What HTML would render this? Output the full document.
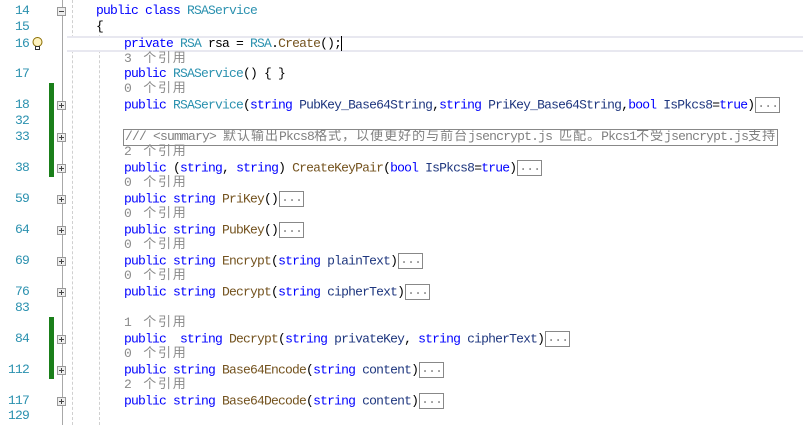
<!DOCTYPE html>
<html><head><meta charset="utf-8"><style>
body{margin:0;width:803px;height:425px;background:#fff;overflow:hidden;position:relative;font-family:"Liberation Mono","Noto Sans CJK SC",monospace;font-size:13px;letter-spacing:-0.8px}
.r{position:absolute;height:16px;line-height:16px;white-space:pre;left:0}
.n{position:absolute;width:29px;text-align:right;color:#2b91af;left:0}
.c{position:absolute;left:124px}
.lens{color:#8a8a8a;letter-spacing:1.8px}
.k{color:#0000ff}.t{color:#2b91af}.m{color:#74531f}.p{color:#1f377f}
.el{display:inline-block;border:1px solid #888;color:#888;height:14px;line-height:12px;vertical-align:middle;padding:0 1px;margin-left:1px}
.z{letter-spacing:1px}
.box{position:absolute;left:57px;width:9px;height:9px;border:1px solid #999;background:#eee;box-sizing:border-box}
.box:before{content:"";position:absolute;left:1px;top:3px;width:5px;height:1px;background:#444}
.box.p2:after{content:"";position:absolute;left:3px;top:1px;width:1px;height:5px;background:#444}
.g{position:absolute;left:49px;width:5px;background:#1a7f1a}
</style></head><body>
<div style="position:absolute;left:62px;top:0;width:1px;height:425px;background:#a8a8a8"></div>
<div style="position:absolute;left:72px;top:0;height:425px;border-left:1px dashed #d0d0d0"></div>
<div style="position:absolute;left:99px;top:20px;height:405px;border-left:1px dashed #d0d0d0"></div>
<div style="position:absolute;left:67px;top:36px;width:736px;height:12px;border-top:2px solid #e8e8f0;border-bottom:2px solid #e8e8f0;background:#fff"></div>
<div class="g" style="top:83px;height:94px"></div>
<div class="g" style="top:317px;height:62px"></div>
<div class="box" style="top:7px"></div>
<div class="box p2" style="top:101px"></div>
<div class="box p2" style="top:133px"></div>
<div class="box p2" style="top:164px"></div>
<div class="box p2" style="top:195px"></div>
<div class="box p2" style="top:226px"></div>
<div class="box p2" style="top:257px"></div>
<div class="box p2" style="top:288px"></div>
<div class="box p2" style="top:335px"></div>
<div class="box p2" style="top:366px"></div>
<div class="box p2" style="top:397px"></div>
<svg style="position:absolute;left:31px;top:36px" width="13" height="16" viewBox="0 0 13 16"><circle cx="6.5" cy="6" r="4.5" fill="#fff3c0" stroke="#8a6d00"/><rect x="4.5" y="10.5" width="4" height="3" fill="#fff" stroke="#333"/></svg>

<div class="r" style="top:3px"><span class="n">14</span><span class="c" style="left:96px"><span class="k">public class </span><span class="t">RSAService</span></span></div>
<div class="r" style="top:19px"><span class="n">15</span><span class="c" style="left:96px">{</span></div>
<div class="r" style="top:36px"><span class="n">16</span><span class="c"><span class="k">private </span><span class="t">RSA</span> rsa = <span class="t">RSA</span>.<span class="m">Create</span>();<span style="border-left:1px solid #000"></span></span></div>
<div class="r" style="top:51px"><span class="c lens">3 个引用</span></div>
<div class="r" style="top:66px"><span class="n">17</span><span class="c"><span class="k">public </span><span class="t">RSAService</span>() { }</span></div>
<div class="r" style="top:81px"><span class="c lens">0 个引用</span></div>
<div class="r" style="top:97px"><span class="n">18</span><span class="c"><span class="k">public </span><span class="t">RSAService</span>(<span class="k">string</span> <span class="p">PubKey_Base64String</span>,<span class="k">string</span> <span class="p">PriKey_Base64String</span>,<span class="k">bool</span> <span class="p">IsPkcs8</span>=<span class="k">true</span>)<span class="el">...</span></span></div>
<div class="r" style="top:113px"><span class="n">32</span></div>
<div class="r" style="top:129px"><span class="n">33</span><span class="c" style="left:123px"><span class="el" style="margin:0;width:651px;height:15px;line-height:14px;color:#808080;overflow:hidden">/// &lt;summary&gt; <span class="z">默认输出</span>Pkcs8<span class="z">格式，以便更好的与前台</span>jsencrypt.js <span class="z">匹配。</span>Pkcs1<span class="z">不受</span>jsencrypt.js<span class="z">支持</span></span></span></div>
<div class="r" style="top:144px"><span class="c lens">2 个引用</span></div>
<div class="r" style="top:160px"><span class="n">38</span><span class="c"><span class="k">public </span>(<span class="k">string</span>, <span class="k">string</span>) <span class="m">CreateKeyPair</span>(<span class="k">bool</span> <span class="p">IsPkcs8</span>=<span class="k">true</span>)<span class="el">...</span></span></div>
<div class="r" style="top:175px"><span class="c lens">0 个引用</span></div>
<div class="r" style="top:191px"><span class="n">59</span><span class="c"><span class="k">public string </span><span class="m">PriKey</span>()<span class="el">...</span></span></div>
<div class="r" style="top:206px"><span class="c lens">0 个引用</span></div>
<div class="r" style="top:222px"><span class="n">64</span><span class="c"><span class="k">public string </span><span class="m">PubKey</span>()<span class="el">...</span></span></div>
<div class="r" style="top:237px"><span class="c lens">0 个引用</span></div>
<div class="r" style="top:253px"><span class="n">69</span><span class="c"><span class="k">public string </span><span class="m">Encrypt</span>(<span class="k">string</span> <span class="p">plainText</span>)<span class="el">...</span></span></div>
<div class="r" style="top:268px"><span class="c lens">0 个引用</span></div>
<div class="r" style="top:284px"><span class="n">76</span><span class="c"><span class="k">public string </span><span class="m">Decrypt</span>(<span class="k">string</span> <span class="p">cipherText</span>)<span class="el">...</span></span></div>
<div class="r" style="top:300px"><span class="n">83</span></div>
<div class="r" style="top:315px"><span class="c lens">1 个引用</span></div>
<div class="r" style="top:331px"><span class="n">84</span><span class="c"><span class="k">public  string </span><span class="m">Decrypt</span>(<span class="k">string</span> <span class="p">privateKey</span>, <span class="k">string</span> <span class="p">cipherText</span>)<span class="el">...</span></span></div>
<div class="r" style="top:346px"><span class="c lens">0 个引用</span></div>
<div class="r" style="top:362px"><span class="n">112</span><span class="c"><span class="k">public string </span><span class="m">Base64Encode</span>(<span class="k">string</span> <span class="p">content</span>)<span class="el">...</span></span></div>
<div class="r" style="top:377px"><span class="c lens">2 个引用</span></div>
<div class="r" style="top:393px"><span class="n">117</span><span class="c"><span class="k">public string </span><span class="m">Base64Decode</span>(<span class="k">string</span> <span class="p">content</span>)<span class="el">...</span></span></div>
<div class="r" style="top:408px"><span class="n">129</span></div>
</body></html>
